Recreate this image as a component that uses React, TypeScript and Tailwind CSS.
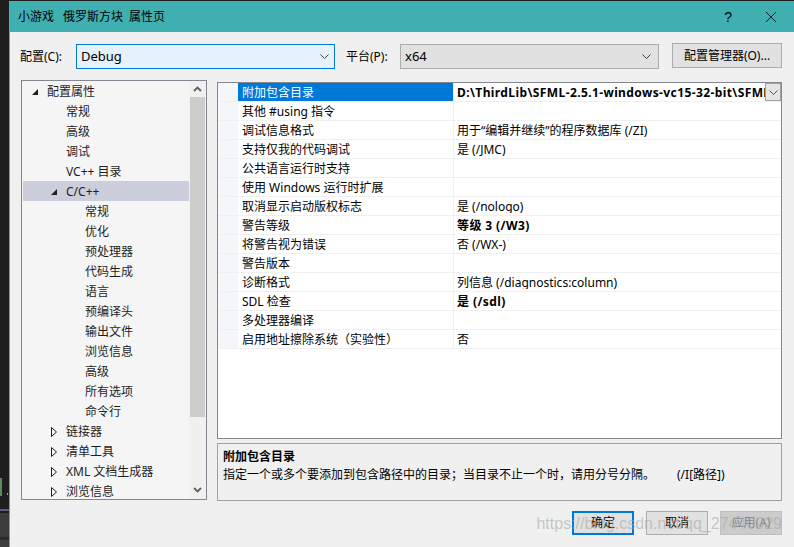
import React from "react";

type TreeItem = { t: string; lvl: 0 | 1 | 2; arrow?: "open" | "closed"; sel?: boolean };

const tree: TreeItem[] = [
  { t: "配置属性", lvl: 0, arrow: "open" },
  { t: "常规", lvl: 1 },
  { t: "高级", lvl: 1 },
  { t: "调试", lvl: 1 },
  { t: "VC++ 目录", lvl: 1 },
  { t: "C/C++", lvl: 1, arrow: "open", sel: true },
  { t: "常规", lvl: 2 },
  { t: "优化", lvl: 2 },
  { t: "预处理器", lvl: 2 },
  { t: "代码生成", lvl: 2 },
  { t: "语言", lvl: 2 },
  { t: "预编译头", lvl: 2 },
  { t: "输出文件", lvl: 2 },
  { t: "浏览信息", lvl: 2 },
  { t: "高级", lvl: 2 },
  { t: "所有选项", lvl: 2 },
  { t: "命令行", lvl: 2 },
  { t: "链接器", lvl: 1, arrow: "closed" },
  { t: "清单工具", lvl: 1, arrow: "closed" },
  { t: "XML 文档生成器", lvl: 1, arrow: "closed" },
  { t: "浏览信息", lvl: 1, arrow: "closed" },
];

type Row = { n: string; v: string; b?: boolean; sel?: boolean };

const rows: Row[] = [
  { n: "附加包含目录", v: "D:\\ThirdLib\\SFML-2.5.1-windows-vc15-32-bit\\SFML-2.5.1\\include", b: true, sel: true },
  { n: "其他 #using 指令", v: "" },
  { n: "调试信息格式", v: "用于“编辑并继续”的程序数据库 (/ZI)" },
  { n: "支持仅我的代码调试", v: "是 (/JMC)" },
  { n: "公共语言运行时支持", v: "" },
  { n: "使用 Windows 运行时扩展", v: "" },
  { n: "取消显示启动版权标志", v: "是 (/nologo)" },
  { n: "警告等级", v: "等级 3 (/W3)", b: true },
  { n: "将警告视为错误", v: "否 (/WX-)" },
  { n: "警告版本", v: "" },
  { n: "诊断格式", v: "列信息 (/diagnostics:column)" },
  { n: "SDL 检查", v: "是 (/sdl)", b: true },
  { n: "多处理器编译", v: "" },
  { n: "启用地址擦除系统（实验性）", v: "否" },
];

function ChevronDown({ color = "#404040" }: { color?: string }) {
  return (
    <svg width="9" height="5" viewBox="0 0 9 5">
      <path d="M0.5 0.5 L4.5 4.5 L8.5 0.5" fill="none" stroke={color} strokeWidth="1" />
    </svg>
  );
}

function Arrow({ kind }: { kind?: "open" | "closed" }) {
  if (kind === "open")
    return (
      <svg width="6" height="6" viewBox="0 0 6 6">
        <polygon points="6,0 6,6 0,6" fill="#1e1e1e" />
      </svg>
    );
  if (kind === "closed")
    return (
      <svg width="6" height="10" viewBox="0 0 6 10">
        <polygon points="0.5,0.5 5.5,5 0.5,9.5" fill="none" stroke="#1e1e1e" strokeWidth="1" />
      </svg>
    );
  return null;
}

export default function App() {
  return (
    <div className="w-[794px] h-[547px] flex bg-[#1e1e1e] overflow-hidden relative font-['Noto_Sans','Noto_Sans_CJK_SC',sans-serif] text-[12px] leading-none text-black">
      {/* dark editor strip */}
      <div className="w-[9px] h-full relative bg-[#1e1e1e]">
        <div className="absolute left-0 top-[478px] w-[2px] h-[18px] bg-[#5b8a5b]" />
        <div className="absolute left-[7px] top-[493px] w-[1px] h-[2px] bg-[#7aa7d9]" />
        <div className="absolute left-0 top-[509px] w-[9px] h-[2px] bg-[#8a6fa8] opacity-70" />
        <div className="absolute left-0 top-[513px] w-[9px] h-[24px] bg-[#3c3c3f]" />
        <div className="absolute left-0 top-[537px] w-[9px] h-[3px] bg-[#2a2a2a]" />
        <div className="absolute left-0 top-[540px] w-[9px] h-[7px] bg-[#3c3c3f]" />
      </div>

      {/* dialog */}
      <div className="flex-1 flex flex-col mt-[1px] border-l border-[#4ab3b4] bg-[#f0f0f0]">
        {/* title bar */}
        <div className="h-[31px] shrink-0 bg-[#40afb1] flex items-center pl-[8px]">
          <span>小游戏</span>
          <span className="ml-[9px]">俄罗斯方块</span>
          <span className="ml-[6px]">属性页</span>
          <div className="flex-1" />
          <span className="text-[14px] mr-[33px] font-['Liberation_Sans',sans-serif]">?</span>
          <svg width="12" height="12" viewBox="0 0 12 12" className="mr-[17px]">
            <path d="M1 1 L11 11 M11 1 L1 11" stroke="#1a1a1a" strokeWidth="1" />
          </svg>
        </div>

        {/* config row */}
        <div className="flex items-center h-[25px] mt-[12px] pl-[10px]">
          <span className="w-[56px]">配置(C):</span>
          <div className="w-[259px] h-[25px] border border-[#0078d7] bg-[#e5f1fb] flex items-center pl-[4px] pr-[5px]">
            <span className="flex-1 text-[13px]">Debug</span>
            <ChevronDown />
          </div>
          <span className="ml-[11px] w-[54px]">平台(P):</span>
          <div className="w-[259px] h-[25px] border border-[#adadad] bg-[#e1e1e1] flex items-center pl-[4px] pr-[7px]">
            <span className="flex-1 text-[13px]">x64</span>
            <ChevronDown />
          </div>
          <div className="ml-[13px] w-[110px] h-[25px] -mt-[2px] border border-[#adadad] bg-[#e1e1e1] flex items-center justify-center">
            配置管理器(O)...
          </div>
        </div>

        {/* main */}
        <div className="flex mt-[11px] pl-[11px]">
          {/* tree */}
          <div className="w-[186px] h-[420px] border border-[#828790] bg-[#f5f5f5] flex overflow-hidden">
            <div className="flex-1 flex flex-col overflow-hidden">
              {tree.map((it, i) => (
                <div
                  key={i}
                  className={
                    "h-[20px] shrink-0 flex items-center pt-[1px] text-[#1e1e1e] " +
                    (it.sel ? "bg-[#cccedb] ml-[1px] " : "") +
                    (it.lvl === 0 ? "pl-[10px]" : it.lvl === 1 ? "pl-[29px]" : "pl-[48px]")
                  }
                >
                  <div className={"w-[15px] flex items-center " + (it.sel ? "-ml-[1px]" : "")}>
                    <Arrow kind={it.arrow} />
                  </div>
                  <span className="whitespace-nowrap">{it.t}</span>
                </div>
              ))}
            </div>
            <div className="w-[17px] bg-[#f0f0f0] flex flex-col">
              <div className="h-[16px] flex items-center justify-center">
                <svg width="9" height="6" viewBox="0 0 9 6">
                  <path d="M1 5 L4.5 1.5 L8 5" fill="none" stroke="#606060" strokeWidth="1.8" />
                </svg>
              </div>
              <div className="h-[320px] mx-[1px] bg-[#cdcdcd]" />
              <div className="flex-1" />
              <div className="h-[18px] flex items-center justify-center">
                <svg width="9" height="6" viewBox="0 0 9 6">
                  <path d="M1 1 L4.5 4.5 L8 1" fill="none" stroke="#606060" strokeWidth="1.8" />
                </svg>
              </div>
            </div>
          </div>

          {/* right column */}
          <div className="ml-[10px] w-[565px] flex flex-col">
            <div className="mt-[2px] h-[357px] border border-[#828790] bg-white flex flex-col overflow-hidden">
              {rows.map((r, i) => (
                <div key={i} className="h-[19px] shrink-0 flex border-b border-[#f0f0f0]">
                  <div className="w-[20px] bg-[#f4f6f9]" />
                  <div
                    className={
                      "w-[215px] flex items-center pl-[4px] pt-[2px] whitespace-nowrap " +
                      (r.sel ? "bg-[#0078d7] text-white" : "")
                    }
                  >
                    {r.n}
                  </div>
                  <div className="flex-1 flex items-center border-l border-[#f0f0f0] pl-[3px] overflow-hidden">
                    <span
                      className={
                        "flex-1 pt-[2px] whitespace-nowrap overflow-hidden " + (r.b ? "font-bold tracking-[0.4px]" : "")
                      }
                    >
                      {r.v}
                    </span>
                    {r.sel && (
                      <div className="w-[16px] h-[18px] shrink-0 border border-[#a0a0a0] bg-[#e5e5e5] flex items-center justify-center">
                        <ChevronDown color="#555" />
                      </div>
                    )}
                  </div>
                </div>
              ))}
            </div>
            <div className="mt-[4px] h-[58px] border border-[#a0a0a0] bg-[#f0f0f0] pl-[5px] pt-[6px] flex flex-col">
              <div className="font-bold h-[14px] flex items-center">附加包含目录</div>
              <div className="mt-[4px] h-[14px] flex items-center whitespace-nowrap">
                <span>指定一个或多个要添加到包含路径中的目录；当目录不止一个时，请用分号分隔。</span>
                <span className="ml-[22px]">(/I[路径])</span>
              </div>
            </div>
          </div>
        </div>

        {/* buttons */}
        <div className="flex justify-end gap-[12px] pr-[12px] mt-[10px] relative">
          <div className="w-[62px] h-[24px] border-2 border-[#0078d7] bg-[#e1e1e1] flex items-center justify-center">确定</div>
          <div className="w-[62px] h-[24px] border border-[#adadad] bg-[#e1e1e1] flex items-center justify-center">取消</div>
          <div className="w-[62px] h-[24px] border border-[#bfbfbf] bg-[#cccccc] text-[#838383] flex items-center justify-center">应用(A)</div>
          <div className="absolute right-[12px] top-[5px] text-[16px] text-[#a8a8a8]/60 font-['Liberation_Sans',sans-serif] whitespace-nowrap pointer-events-none">
            https://blog.csdn.net/qq_27440929
          </div>
        </div>
      </div>
    </div>
  );
}
